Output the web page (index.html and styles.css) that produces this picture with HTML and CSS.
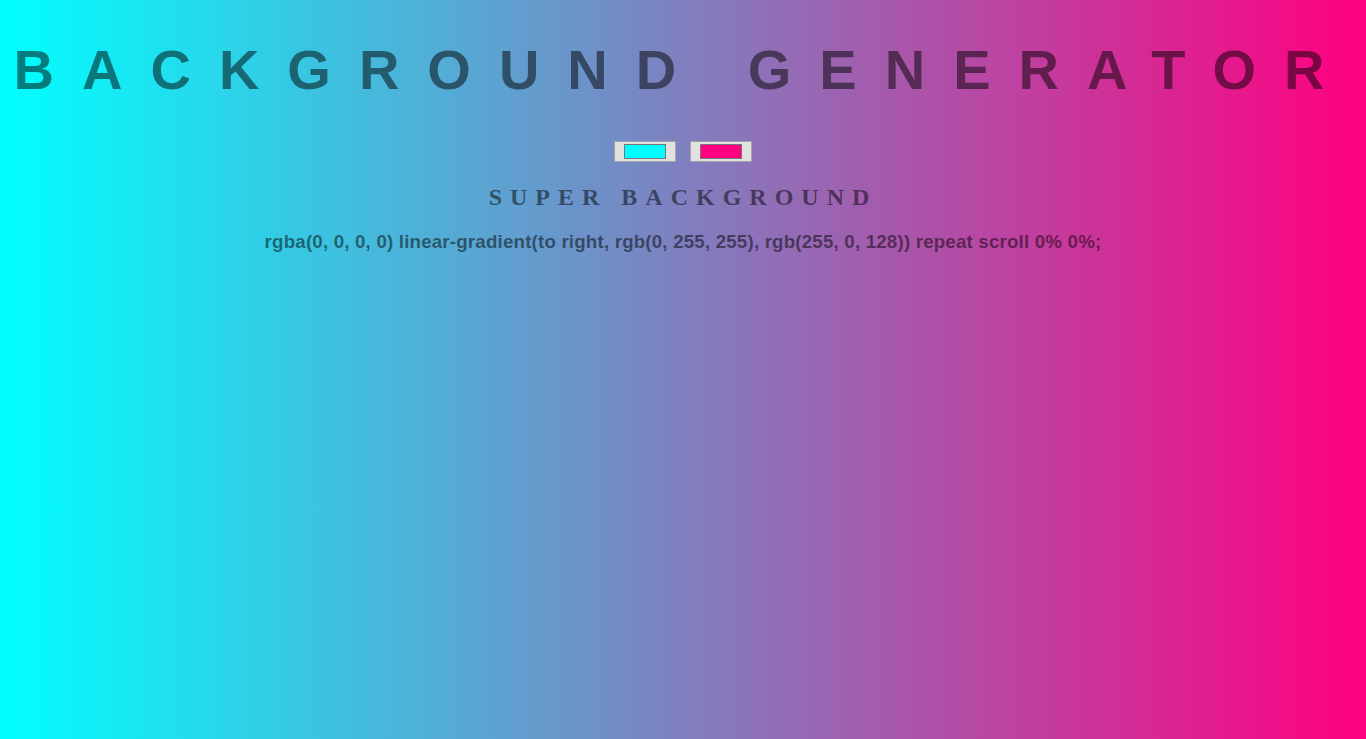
FILE: index.html
```html
<!DOCTYPE html>
<html lang="en">
<head>
<meta charset="utf-8">
<title>Background Generator</title>
<link rel="stylesheet" href="styles.css">
</head>
<body>
<h1 class="title">Background Generator</h1>
<div class="controls">
  <input class="picker" type="color" value="#00ffff" name="color1">
  <input class="picker" type="color" value="#ff0080" name="color2">
</div>
<h2 class="subtitle">Super Background</h2>
<h3 class="css-output">rgba(0, 0, 0, 0) linear-gradient(to right, rgb(0, 255, 255), rgb(255, 0, 128)) repeat scroll 0% 0%;</h3>
</body>
</html>
```

FILE: styles.css
```css
html, body {
  height: 100%;
}

body {
  margin: 0;
  padding: 0 8px;
  box-sizing: border-box;
  font-family: "Liberation Sans", Arial, sans-serif;
  font-size: 16px;
  color: rgba(0, 0, 0, 0.5);
  text-align: center;
  text-transform: uppercase;
  letter-spacing: 8px;
  background: linear-gradient(to right, rgb(0, 255, 255), rgb(255, 0, 128));
}

.title {
  margin: 38px 0 0;
  font-family: "Liberation Sans", Arial, sans-serif;
  font-weight: 700;
  font-size: 56px;
  line-height: 64px;
  letter-spacing: 28px;
  color: rgba(0, 0, 0, 0.5);
}

.controls {
  margin-top: 39px;
  display: flex;
  justify-content: center;
  gap: 14px;
  height: 21px;
}

.picker {
  width: 62px;
  height: 21px;
  box-sizing: border-box;
  padding: 2px 9px;
  margin: 0;
  border: 1px solid #a3a3a3;
  background: #e1e1e1;
  cursor: pointer;
}

.picker::-webkit-color-swatch-wrapper {
  padding: 0;
}

.picker::-webkit-color-swatch {
  border: 1px solid #777777;
}

.subtitle {
  margin: 21px 0 0;
  font-family: "Liberation Serif", "Times New Roman", serif;
  font-weight: 700;
  font-size: 24px;
  line-height: 28px;
  letter-spacing: 8px;
}

.css-output {
  margin: 20px 0 0;
  font-family: "Liberation Sans", Arial, sans-serif;
  font-weight: 900;
  font-size: 18.72px;
  line-height: 22px;
  text-transform: none;
  letter-spacing: 0.19px;
}
```
